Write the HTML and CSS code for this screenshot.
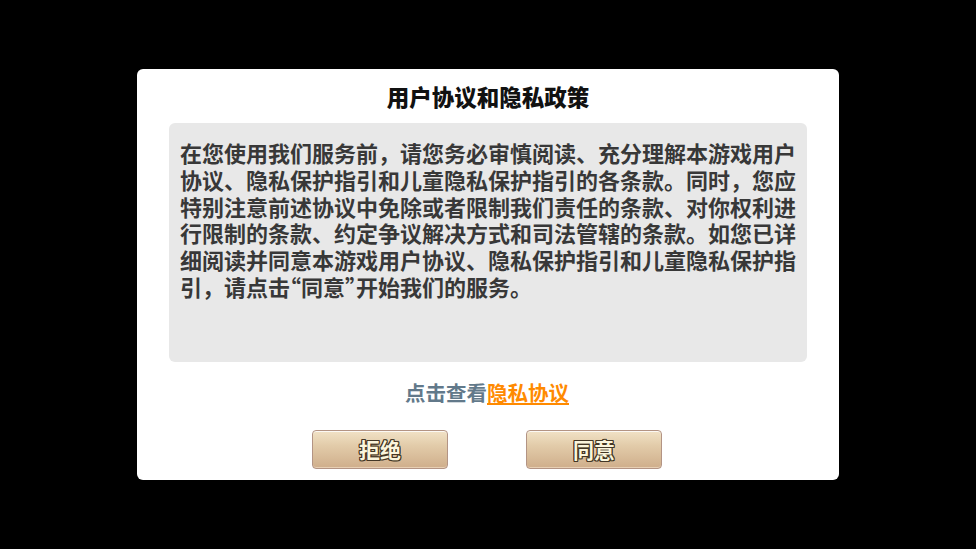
FILE: index.html
```html
<!DOCTYPE html>
<html lang="zh-CN">
<head>
<meta charset="utf-8">
<link rel="stylesheet" href="styles.css">
</head>
<body>
<div class="dialog">
  <div class="title">用户协议和隐私政策</div>
  <div class="content">在您使用我们服务前，请您务必审慎阅读、充分理解本游戏用户协议、隐私保护指引和儿童隐私保护指引的各条款。同时，您应特别注意前述协议中免除或者限制我们责任的条款、对你权利进行限制的条款、约定争议解决方式和司法管辖的条款。如您已详细阅读并同意本游戏用户协议、隐私保护指引和儿童隐私保护指引，请点击<span class="q">“同意”</span>开始我们的服务。</div>
  <div class="link-row">点击查看<a class="link">隐私协议</a></div>
  <div class="buttons">
    <div class="btn">拒绝</div>
    <div class="btn">同意</div>
  </div>
</div>
</body>
</html>
```
FILE: styles.css
```css
html, body {
  margin: 0;
  padding: 0;
  background: #000;
  width: 976px;
  height: 549px;
  overflow: hidden;
  font-family: "Noto Sans CJK SC", "Noto Sans", sans-serif;
}
.dialog {
  margin: 69px 0 0 137px;
  width: 702px;
  height: 411px;
  background: #fff;
  border-radius: 6px;
  display: flex;
  flex-direction: column;
  align-items: center;
}
.title {
  height: 54px;
  line-height: 54px;
  font-size: 22.5px;
  font-weight: 900;
  color: #111;
}
.content {
  box-sizing: border-box;
  width: 638px;
  height: 239px;
  background: #e8e8e8;
  border-radius: 6px;
  padding: 16px 10px 0 11px;
  font-size: 22px;
  line-height: 26.8px;
  font-weight: bold;
  color: #383838;
}
.q {
  font-feature-settings: "halt" 1;
}
.link-row {
  margin-top: 16px;
  height: 28px;
  line-height: 28px;
  font-size: 20.5px;
  font-weight: bold;
  color: #62798a;
  margin-right: 2px;
}
.link {
  color: #ff8a00;
  text-decoration: underline;
  text-decoration-thickness: 2px;
  text-underline-offset: 2px;
}
.buttons {
  margin-top: 24px;
  display: flex;
  gap: 78px;
  margin-right: 2px;
}
.btn {
  box-sizing: border-box;
  width: 136px;
  height: 39px;
  padding-bottom: 2px;
  border: 1px solid #b39484;
  border-radius: 4px;
  background: linear-gradient(to bottom, #f1e2c6 0%, #e2cba9 40%, #cfae8b 100%);
  box-shadow: inset 0 1px 0 rgba(255,255,255,0.8), inset 0 -1px 0 rgba(255,240,220,0.5);
  display: flex;
  align-items: center;
  justify-content: center;
  font-size: 21px;
  font-weight: bold;
  color: #fbf5dc;
  text-shadow: -1px -1px 0 #433625, 1px -1px 0 #433625, -1px 1px 0 #433625, 1px 1px 0 #433625, 0 1px 0 #433625, 0 -1px 0 #433625, 1px 0 0 #433625, -1px 0 0 #433625;
}
```
